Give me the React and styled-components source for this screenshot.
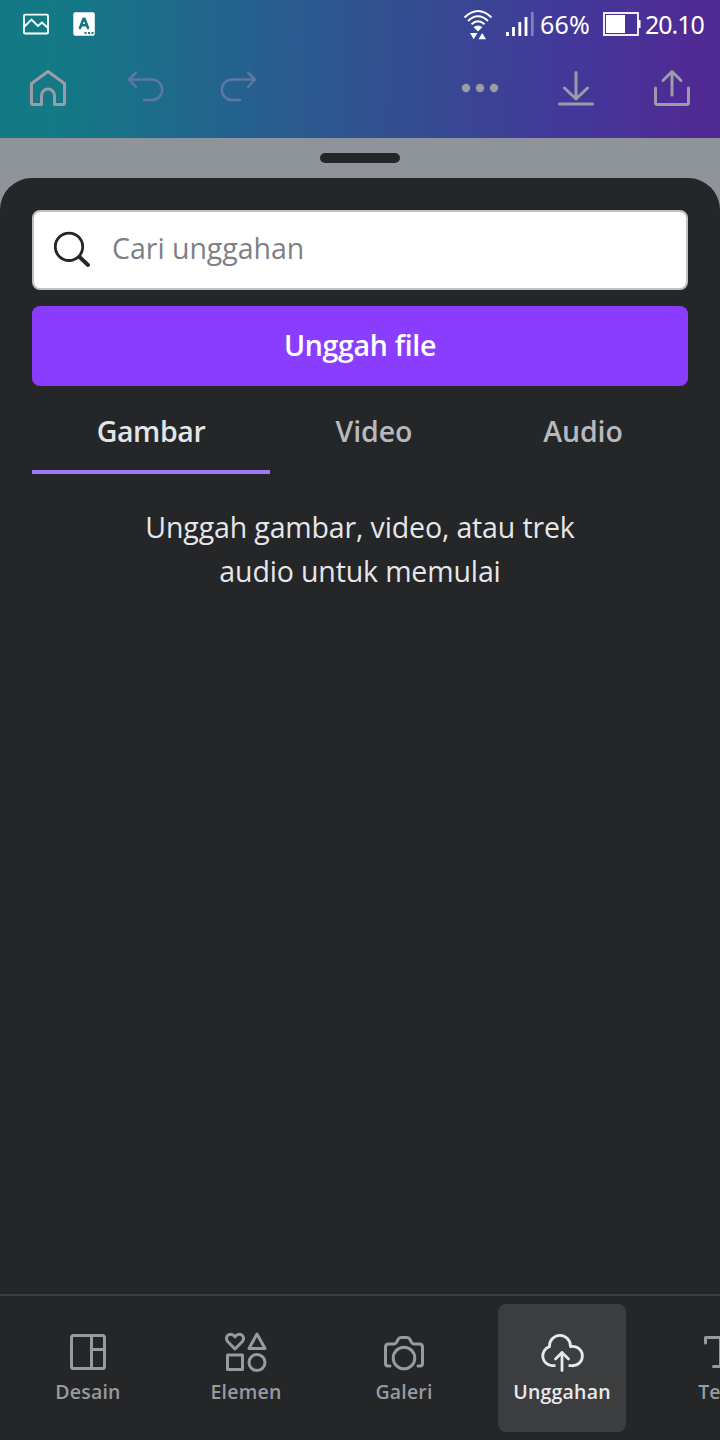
import React, { useState } from 'react';
import styled, { createGlobalStyle } from 'styled-components';

const GlobalStyle = createGlobalStyle`
  * {
    box-sizing: border-box;
  }
  body {
    margin: 0;
    background: #252627;
    font-family: 'Open Sans', 'Noto Sans', sans-serif;
  }
  button {
    border: 0;
    padding: 0;
    background: none;
    font-family: inherit;
  }
`;

const Screen = styled.div`
  width: 720px;
  height: 1440px;
  display: flex;
  flex-direction: column;
  overflow: hidden;
  background: #8f939a;
`;

const Header = styled.header`
  height: 138px;
  flex: none;
  background: linear-gradient(91deg, #137a85 7%, #265f8f 36%, #30538f 50%, #42399a 78%, #502a94 97%);
`;

const StatusBar = styled.div`
  height: 48px;
  display: flex;
  align-items: center;
  padding: 0 16px 0 22px;
  color: #fff;
  font-family: 'Noto Sans', sans-serif;
  font-size: 25px;
`;

const StatusIcons = styled.div`
  display: flex;
  align-items: center;
  gap: 22px;
  margin-right: auto;
`;

const StatusText = styled.span`
  line-height: 48px;
  letter-spacing: ${(props) => props.$spacing};
  margin-left: ${(props) => props.$gap};
  width: ${(props) => props.$width};
  white-space: nowrap;
`;

const SignalSlot = styled.div`
  margin-left: 12px;
`;

const Toolbar = styled.div`
  height: 80px;
  display: flex;
  align-items: center;
  padding: 0 24px;
`;

const ToolButton = styled.button`
  width: 48px;
  height: 48px;
  margin-right: ${(props) => props.$gap || '0'};
  margin-left: ${(props) => (props.$push ? 'auto' : '0')};
  color: ${(props) => (props.disabled ? '#5b78a2' : '#9c9ca6')};
`;

const HandleArea = styled.div`
  height: 40px;
  flex: none;
  display: flex;
  align-items: center;
  justify-content: center;
`;

const Handle = styled.div`
  width: 80px;
  height: 10px;
  border-radius: 5px;
  background: #252627;
`;

const Sheet = styled.main`
  flex: 1;
  min-height: 0;
  display: flex;
  flex-direction: column;
  border-radius: 32px 32px 0 0;
  background: #252627;
`;

const Content = styled.div`
  flex: 1;
  padding: 32px 32px 0;
`;

const SearchBox = styled.label`
  height: 80px;
  display: flex;
  align-items: center;
  padding: 0 16px 4px;
  border: 2px solid #bdc1c6;
  border-radius: 8px;
  background: #fff;
  color: #252627;
`;

const SearchInput = styled.input`
  flex: 1;
  margin-left: 22px;
  padding: 0;
  border: 0;
  outline: 0;
  background: none;
  font-family: inherit;
  font-size: 28.5px;
  letter-spacing: -0.02px;
  color: #252627;

  &::placeholder {
    color: #7d8086;
    opacity: 1;
  }
`;

const UploadButton = styled.button`
  display: block;
  width: 100%;
  height: 80px;
  margin-top: 16px;
  padding-bottom: 2px;
  border-radius: 8px;
  background: #8b3dff;
  color: #fff;
  font-size: 28.5px;
  font-weight: 600;
  letter-spacing: -0.3px;
`;

const Tabs = styled.div`
  height: 88px;
  display: flex;
`;

const Tab = styled.button`
  width: ${(props) => props.$width};
  height: 88px;
  padding-top: 6px;
  border-bottom: 4px solid ${(props) => (props.$active ? '#a279f5' : 'transparent')};
  color: ${(props) => (props.$active ? '#e3e4e8' : '#b7b9be')};
  font-size: 28.5px;
  font-weight: 600;
  letter-spacing: ${(props) => props.$spacing};
`;

const EmptyText = styled.p`
  margin: 31px auto 0;
  width: 460px;
  text-align: center;
  color: #e6e7ea;
  font-size: 28.5px;
  line-height: 44px;
  letter-spacing: -0.14px;
`;

const BottomNav = styled.nav`
  height: 146px;
  flex: none;
  display: flex;
  gap: 30px;
  padding: 8px 0 0 24px;
  border-top: 2px solid #3c3d3f;
  overflow: hidden;
`;

const NavItem = styled.button`
  width: 128px;
  height: 128px;
  flex: none;
  display: flex;
  flex-direction: column;
  align-items: center;
  padding-top: 24px;
  border-radius: 8px;
  background: ${(props) => (props.$active ? '#3c3d3f' : 'transparent')};
  color: ${(props) => (props.$active ? '#e8e9ec' : '#989aa1')};
`;

const NavLabel = styled.span`
  margin-top: 2px;
  font-size: 19.5px;
  font-weight: 600;
  line-height: 28px;
  letter-spacing: 0.2px;
  white-space: nowrap;
`;

const IconSvg = styled.svg`
  display: block;
  flex: none;
`;

const Icon = ({ w = 48, h = 48, sw = 3, children }) => (
  <IconSvg
    width={w}
    height={h}
    viewBox={`0 0 ${w} ${h}`}
    fill="none"
    stroke="currentColor"
    strokeWidth={sw}
    strokeLinecap="round"
    strokeLinejoin="round"
  >
    {children}
  </IconSvg>
);

const PictureIcon = () => (
  <Icon w={28} h={24} sw={1.8}>
    <rect x="2" y="2.7" width="24" height="18.8" rx="1" />
    <path d="M2.5 14.5 9.5 7.5 16 14 20 10.5 25.5 15.5" strokeLinejoin="miter" />
  </Icon>
);

const KeyboardIcon = () => (
  <Icon w={24} h={24} sw={2.6}>
    <rect x="1.3" y="0.3" width="21.5" height="23.4" rx="2" fill="#fff" stroke="none" />
    <path d="M8 16 11.5 6.8H12.5L16 16M9.5 13.2H14.5" stroke="#187583" />
    <path d="M12.5 21H14.5M16 21H18M19.5 21H21.5" stroke="#187583" strokeWidth="2" strokeLinecap="butt" />
  </Icon>
);

const WifiIcon = () => (
  <Icon w={30} h={32} sw={1.9}>
    <path d="M1.5 9.5Q15-3.5 28.5 9.5M5 13Q15 3.5 25 13M8.5 16.2Q15 10.5 21.5 16.2" strokeLinecap="butt" />
    <path d="M10.5 19Q15 16 19.5 19L15 23.5ZM7 25H14.5L10.7 31.3ZM15.5 31.3H23L19.2 25Z" fill="currentColor" stroke="none" />
  </Icon>
);

const SignalIcon = () => (
  <Icon w={30} h={26} sw={2.8}>
    <path d="M2.5 25V21M8.5 25V16M14.8 25V11M21 25V6" strokeLinecap="butt" />
    <path d="M27.3 25V1" strokeLinecap="butt" opacity="0.35" />
  </Icon>
);

const BatteryIcon = () => (
  <Icon w={38} h={26} sw={1.8}>
    <rect x="1" y="2" width="34" height="22" strokeLinejoin="miter" />
    <path d="M3 4H22V22H3ZM35 9H37.5V17H35Z" fill="currentColor" stroke="none" />
  </Icon>
);

const HomeIcon = () => (
  <Icon>
    <path d="M7.5 19.5 24 7.5 40.5 19.5V39Q40.5 40.5 39 40.5H30.5V31.5A6.5 6.5 0 0 0 17.5 31.5V40.5H9Q7.5 40.5 7.5 39Z" />
  </Icon>
);

const UndoIcon = () => (
  <Icon sw={2.5}>
    <path d="M14 8.5 7 15.5 14 23M7 15.5H30A10 10 0 0 1 30 36H22" />
  </Icon>
);

const RedoIcon = () => (
  <Icon sw={2.5}>
    <path d="M34 8.5 41 15.5 34 23M41 15.5H18A10 10 0 0 0 18 36H26" />
  </Icon>
);

const MoreIcon = () => (
  <Icon>
    <g fill="currentColor" stroke="none">
      <circle cx="10" cy="24" r="4.2" />
      <circle cx="24" cy="24" r="4.2" />
      <circle cx="38" cy="24" r="4.2" />
    </g>
  </Icon>
);

const DownloadIcon = () => (
  <Icon>
    <path d="M24 8.5V34.5M12.5 24 24 35 35.5 24M7.5 40H40.5" />
  </Icon>
);

const ShareIcon = () => (
  <Icon>
    <path d="M24 31V7.5M15 16.5 24 7.5 33 16.5M7.5 24V38.5Q7.5 40.5 9.5 40.5H38.5Q40.5 40.5 40.5 38.5V24" />
  </Icon>
);

const SearchIcon = () => (
  <Icon w={40} h={40} sw={2.8}>
    <circle cx="19" cy="18.8" r="13.7" />
    <path d="M29.5 29 38 37" strokeWidth="3.8" />
  </Icon>
);

const DesignIcon = () => (
  <Icon>
    <rect x="7.5" y="7.5" width="33" height="33" rx="2" />
    <path d="M27.5 7.5V40.5M27.5 21.5H40.5" />
  </Icon>
);

const ElementsIcon = () => (
  <Icon>
    <path d="M13 21 5.6 13.5C1.5 8.5 9 3 13 8.8 17 3 24.5 8.5 20.4 13.5Z" />
    <path d="M35 6 43 20.5H27Z" />
    <rect x="5.5" y="27" width="15" height="14.5" />
    <circle cx="35" cy="34.5" r="8" />
  </Icon>
);

const GalleryIcon = () => (
  <Icon>
    <path d="M10 38H8Q5.5 38 5.5 35.5V19Q5.5 16 8.5 16H13.5Q16 16 17 13.5L18 11.5Q19 9.5 21 9.5H27Q29 9.5 30 11.5L31 13.5Q32 16 34.5 16H39.5Q42.5 16 42.5 19V35.5Q42.5 38 40 38H38" />
    <circle cx="24" cy="30" r="10.8" />
  </Icon>
);

const UploadsIcon = () => (
  <Icon sw={2.8}>
    <path d="M17.5 37.7H14A9.8 9.8 0 0 1 11.5 18.6 10.48 10.48 0 1 1 32.4 18.6A9.7 9.7 0 1 1 34 37.7H30.5" strokeLinecap="butt" />
    <path d="M24 42.5V24.5M17.5 31 24 24.5 30.5 31" />
  </Icon>
);

const TextIcon = () => (
  <Icon>
    <path d="M9.5 15V9.5H39.5V15M24.5 9.5V38.5M17.5 38.5H31.5" />
  </Icon>
);

const TABS = [
  { id: 'gambar', label: 'Gambar', width: '238px', spacing: '-0.4px' },
  { id: 'video', label: 'Video', width: '208px', spacing: '-0.1px' },
  { id: 'audio', label: 'Audio', width: '210px', spacing: '-0.1px' },
];

const NAV = [
  { id: 'desain', label: 'Desain', icon: DesignIcon },
  { id: 'elemen', label: 'Elemen', icon: ElementsIcon },
  { id: 'galeri', label: 'Galeri', icon: GalleryIcon },
  { id: 'unggahan', label: 'Unggahan', icon: UploadsIcon },
  { id: 'teks', label: 'Teks', icon: TextIcon },
];

function App() {
  const [tab, setTab] = useState('gambar');
  const [page, setPage] = useState('unggahan');

  return (
    <Screen>
      <GlobalStyle />
      <Header>
        <StatusBar>
          <StatusIcons>
            <PictureIcon />
            <KeyboardIcon />
          </StatusIcons>
          <WifiIcon />
          <SignalSlot>
            <SignalIcon />
          </SignalSlot>
          <StatusText $gap="5px" $width="63px" $spacing="0.2px">66%</StatusText>
          <BatteryIcon />
          <StatusText $gap="4px" $width="59px" $spacing="-1px">20.10</StatusText>
        </StatusBar>
        <Toolbar>
          <ToolButton $gap="50px"><HomeIcon /></ToolButton>
          <ToolButton $gap="44px" disabled><UndoIcon /></ToolButton>
          <ToolButton disabled><RedoIcon /></ToolButton>
          <ToolButton $push $gap="48px"><MoreIcon /></ToolButton>
          <ToolButton $gap="48px"><DownloadIcon /></ToolButton>
          <ToolButton><ShareIcon /></ToolButton>
        </Toolbar>
      </Header>
      <HandleArea>
        <Handle />
      </HandleArea>
      <Sheet>
        <Content>
          <SearchBox>
            <SearchIcon />
            <SearchInput placeholder="Cari unggahan" />
          </SearchBox>
          <UploadButton>Unggah file</UploadButton>
          <Tabs>
            {TABS.map((t) => (
              <Tab
                key={t.id}
                $width={t.width}
                $spacing={t.spacing}
                $active={t.id === tab}
                onClick={() => setTab(t.id)}
              >
                {t.label}
              </Tab>
            ))}
          </Tabs>
          <EmptyText>
            Unggah gambar, video, atau trek
            <br />
            audio untuk memulai
          </EmptyText>
        </Content>
        <BottomNav>
          {NAV.map(({ id, label, icon: NavIcon }) => (
            <NavItem key={id} $active={id === page} onClick={() => setPage(id)}>
              <NavIcon />
              <NavLabel>{label}</NavLabel>
            </NavItem>
          ))}
        </BottomNav>
      </Sheet>
    </Screen>
  );
}

export default App;
